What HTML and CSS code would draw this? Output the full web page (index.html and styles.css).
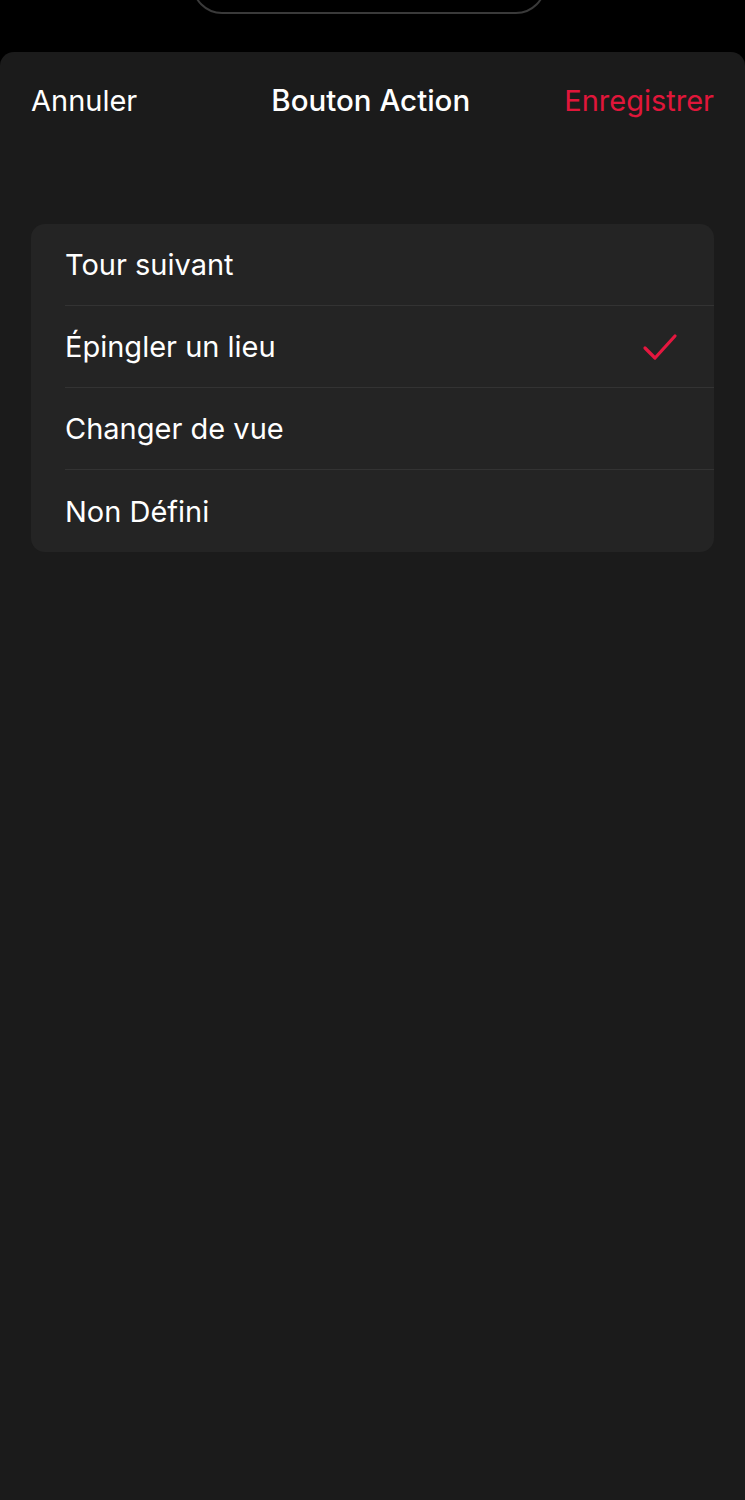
FILE: index.html
```html
<!DOCTYPE html>
<html lang="fr">
<head>
    <meta charset="UTF-8">
    <meta name="viewport" content="width=device-width, initial-scale=1.0">
    <title>Bouton Action</title>
    <link rel="stylesheet" href="styles.css">
</head>
<body>
    <div class="behind"></div>
    <div class="sheet">
        <div class="nav">
            <span class="nav-btn">Annuler</span>
            <span class="nav-title">Bouton Action</span>
            <span class="nav-btn save">Enregistrer</span>
        </div>
        <ul class="list">
            <li class="row"><span>Tour suivant</span></li>
            <li class="row">
                <span>Épingler un lieu</span>
                <svg class="check" width="36" height="28" viewBox="0 0 36 28">
                    <path d="M3 15 L13 25 L33 3" fill="none" stroke="#e5173f" stroke-width="3.2" stroke-linecap="round" stroke-linejoin="round"/>
                </svg>
            </li>
            <li class="row"><span>Changer de vue</span></li>
            <li class="row"><span>Non Défini</span></li>
        </ul>
    </div>
</body>
</html>
```

FILE: styles.css
```css
html, body {
    margin: 0;
    padding: 0;
}
body {
    background-color: #000;
    font-family: Inter, "Noto Sans", sans-serif;
    color: #fff;
    overflow: hidden;
    height: 1500px;
}
.behind {
    width: 350px;
    height: 38px;
    margin: -28px 0 0 192px;
    border: 2px solid #3a3a3a;
    border-radius: 0 0 30px 30px;
}
.sheet {
    margin-top: 38px;
    height: 1448px;
    background-color: #1b1b1b;
    border-radius: 14px 14px 0 0;
    padding: 0 31px;
}
.nav {
    display: flex;
    justify-content: space-between;
    align-items: center;
    height: 96px;
    font-size: 29px;
}
.nav-title {
    font-weight: 500;
    font-size: 29.5px;
    padding-left: 40px;
}
.save {
    color: #e0163a;
}
.list {
    list-style: none;
    margin: 76px 0 0;
    padding: 0;
    background-color: #242424;
    border-radius: 14px;
    overflow: hidden;
}
.row {
    display: flex;
    justify-content: space-between;
    align-items: center;
    height: 82px;
    margin-left: 34px;
    padding-right: 34px;
    font-size: 29px;
    box-sizing: border-box;
    border-bottom: 1px solid #333;
}
.row:last-child {
    border-bottom: none;
}
.check {
    margin-right: 2px;
}
```
